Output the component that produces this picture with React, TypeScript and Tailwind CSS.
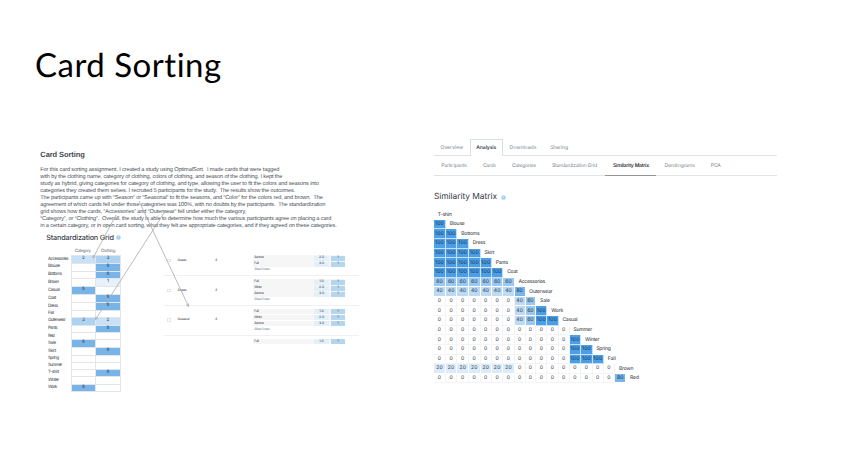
import { useLayoutEffect, useRef, useState } from "react";

// Single line of text, spaced out (or tightened) to fill a given width.
function Fit({ text, w, className = "" }: { text: string; w: number; className?: string }) {
  const ref = useRef<HTMLSpanElement>(null);
  const [ls, setLs] = useState(0);
  useLayoutEffect(() => {
    if (ref.current) {
      const natural = ref.current.getBoundingClientRect().width - ls * text.length;
      setLs((w - natural) / (text.length - 0.5));
    }
  }, [text, w]);
  return (
    <span className={`block shrink-0 whitespace-pre ${className}`} style={{ width: w }}>
      <span ref={ref} style={{ letterSpacing: ls }}>{text}</span>
    </span>
  );
}

const paragraph: [string, number][] = [
  ["For this card sorting assignment, I created a study using OptimalSort.  I made cards that were tagged", 239],
  ["with by the clothing name, category of clothing, colors of clothing, and season of the clothing. I kept the", 242],
  ["study as hybrid, giving categories for category of clothing, and type, allowing the user to fit the colors and seasons into", 278.5],
  ["categories they created them selves. I recruited 5 participants for the study.  The results show the outcomes.", 255],
  ["The participants came up with “Season” or “Seasonal” to fit the seasons, and “Color” for the colors red, and brown.  The", 282.5],
  ["agreement of which cards fell under those categories was 100%, with no doubts by the participants.  The standardization", 285],
  ["grid shows how the cards, “Accessories” and “Outerwear” fell under either the category,", 206],
  ["“Category”, or “Clothing”.  Overall, the study is able to determine how much the various participants agree on placing a card", 291],
  ["in a certain category, or in open card sorting, what they felt are appropriate categories, and if they agreed on these categories.", 296.5],
];

// name, label width, category count, clothing count, row height
const gridRows: [string, number, number, number, number][] = [
  ["Accessories", 20.5, 2, 3, 7.7],
  ["Blouse", 12, 0, 5, 7.8],
  ["Bottoms", 14, 0, 5, 7.7],
  ["Brown", 11, 0, 1, 7.9],
  ["Casual", 11.5, 5, 0, 7.9],
  ["Coat", 8, 0, 5, 7.8],
  ["Dress", 10, 0, 5, 7.8],
  ["Fall", 6, 0, 0, 7.2],
  ["Outerwear", 17.5, 3, 2, 7.7],
  ["Pants", 9.5, 0, 5, 7.7],
  ["Red", 6.5, 0, 0, 7],
  ["Sale", 8, 5, 0, 7.9],
  ["Skirt", 8, 0, 5, 7.7],
  ["Spring", 11, 0, 0, 7],
  ["Summer", 14, 0, 0, 7],
  ["T-shirt", 11, 0, 5, 7.7],
  ["Winter", 11, 0, 0, 7.2],
  ["Work", 9, 5, 0, 7.8],
];

const gridTone: Record<number, string> = {
  0: "bg-white",
  1: "bg-[#e6f1fb]",
  2: "bg-[#c9e1f6]",
  3: "bg-[#aed2f2]",
  5: "bg-[#78b4e8]",
};

const groups: { name: string; w: number; rows: [string, string][]; more: boolean }[] = [
  { name: "Season", w: 9, rows: [["Summer", "2.0"], ["Fall", "3.0"]], more: true },
  { name: "Season", w: 9, rows: [["Fall", "1.0"], ["Winter", "2.0"], ["Summer", "3.0"]], more: true },
  { name: "Seasonal", w: 11.5, rows: [["Fall", "1.0"], ["Winter", "2.0"], ["Summer", "3.0"]], more: true },
  { name: "", w: 0, rows: [["Fall", "1.0"]], more: false },
];

const colW = [11.9, 11.5, 11.6, 11.6, 11.4, 11.4, 11.3, 10.9, 10.7, 11.2, 11.2, 11.2, 11.4, 11.4, 11.3, 11.3, 11];

const matrix: [string, number, number[]][] = [
  ["T-shirt", 14, []],
  ["Blouse", 15, [100]],
  ["Bottoms", 18.5, [100, 100]],
  ["Dress", 12.5, [100, 100, 100]],
  ["Skirt", 10, [100, 100, 100, 100]],
  ["Pants", 12.3, [100, 100, 100, 100, 100]],
  ["Coat", 10.5, [100, 100, 100, 100, 100, 100]],
  ["Accessories", 26.7, [60, 60, 60, 60, 60, 60, 60]],
  ["Outerwear", 23, [40, 40, 40, 40, 40, 40, 40, 80]],
  ["Sale", 10, [0, 0, 0, 0, 0, 0, 0, 40, 60]],
  ["Work", 12, [0, 0, 0, 0, 0, 0, 0, 40, 60, 100]],
  ["Casual", 15, [0, 0, 0, 0, 0, 0, 0, 40, 60, 100, 100]],
  ["Summer", 18.5, [0, 0, 0, 0, 0, 0, 0, 0, 0, 0, 0, 0]],
  ["Winter", 14.3, [0, 0, 0, 0, 0, 0, 0, 0, 0, 0, 0, 0, 100]],
  ["Spring", 14.3, [0, 0, 0, 0, 0, 0, 0, 0, 0, 0, 0, 0, 100, 100]],
  ["Fall", 8, [0, 0, 0, 0, 0, 0, 0, 0, 0, 0, 0, 0, 100, 100, 100]],
  ["Brown", 14.5, [20, 20, 20, 20, 20, 20, 20, 0, 0, 0, 0, 0, 0, 0, 0, 0]],
  ["Red", 9, [0, 0, 0, 0, 0, 0, 0, 0, 0, 0, 0, 0, 0, 0, 0, 0, 80]],
];

const matrixTone: Record<number, string> = {
  0: "bg-white text-[#555b61] border-[#f3f4f5]",
  20: "bg-[#dcebf9] text-[#4a5968] border-white",
  40: "bg-[#bddaf5] text-[#40556b] border-white",
  60: "bg-[#9bc8f0] text-[#345069] border-white",
  80: "bg-[#78b5ec] text-[#2b4a68] border-white",
  100: "bg-[#4c9fe6] text-[#1f4468] border-[#c4dff6]",
};

const matrixTextWidth: Record<number, number> = { 0: 3.4, 20: 6.6, 40: 6.6, 60: 6.4, 80: 6.4, 100: 9 };

// label, gap before, width
const tabs: [string, number, number][] = [
  ["Downloads", 6.8, 26.8],
  ["Sharing", 13.8, 18],
];

const subTabs: [string, number, number][] = [
  ["Participants", 7.3, 25.6],
  ["Cards", 16, 13],
  ["Categories", 16, 24.3],
  ["Standardization Grid", 15.8, 45],
];

function Info() {
  return (
    <svg viewBox="0 0 10 10" className="mt-px size-[5px] shrink-0">
      <circle cx="5" cy="5" r="4.4" fill="#9ccdf1" />
      <path d="M3.7 3.8Q5 2.2 6.2 3.8Q6.2 4.7 5 5.4V6M5 7v.8" fill="none" stroke="white" strokeWidth="1" />
    </svg>
  );
}

function GridCell({ n, first }: { n: number; first?: boolean }) {
  return (
    <div
      className={`flex items-center justify-center border-b border-r border-[#e3e6e9] text-[4.5px] font-medium leading-none text-[#35495c] ${first ? "w-[25.4px] border-l" : "w-[24.8px]"} ${gridTone[n]}`}
    >
      {n > 0 ? n : ""}
    </div>
  );
}

function StandardizationGrid() {
  return (
    <div className="w-[124px] shrink-0">
      <div className="ml-[6px] flex h-[11px] items-center gap-[2.5px] text-[#3c434c]">
        <Fit text="Standardization Grid" w={67.5} className="text-[7.3px] font-medium leading-[11px]" />
        <Info />
      </div>
      <div className="mt-[5.4px] flex h-[6px] text-[4.3px] leading-[7px] text-[#5c6268]">
        <Fit text="Category" w={16} className="ml-[34.5px]" />
        <Fit text="Clothing" w={14.5} className="ml-[10px]" />
      </div>
      <div className="ml-[30.4px] mt-px w-[50.2px] border-t border-[#e3e6e9]" />
      {gridRows.map(([name, w, a, b, h]) => (
        <div key={name} className="flex" style={{ height: h }}>
          <div className="flex w-[30.4px] shrink-0 items-center pl-[7.7px] text-[4.4px] font-medium leading-none text-[#5a5f65]">
            <Fit text={name} w={w} />
          </div>
          <GridCell n={a} first />
          <GridCell n={b} />
        </div>
      ))}
    </div>
  );
}

function CategoryList() {
  return (
    <div className="mt-[22.8px] w-[195px] text-[3.4px] font-medium leading-none text-[#5c6167]">
      {groups.map((g, i) => (
        <div key={i} className={`flex ${i === 0 ? "h-[20.6px] pt-[0.8px]" : "h-[29.9px] border-t border-[#f0f1f2] pt-[3.2px]"}`}>
          <div className={`flex w-[89px] items-center ${i === 0 ? "h-[10px]" : "h-[22px]"}`}>
            {g.name && (
              <>
                <div className="ml-[3px] size-[3.6px] shrink-0 rounded-[0.5px] border border-[#dfe8ea]" />
                <Fit text={g.name} w={g.w} className="ml-[6.7px]" />
                <span className={i === 2 ? "ml-[26px]" : "ml-[28.5px]"}>4</span>
              </>
            )}
          </div>
          <div className="w-[92px]">
            {g.rows.map(([name, v]) => (
              <div key={name} className="mb-[0.7px] flex h-[5.3px] items-center bg-[#f6f6f6] pl-[1px] pt-[0.3px]">
                <Fit text={name} w={name === "Summer" ? 9.5 : name === "Fall" ? 4.5 : 7.5} />
                <div className="ml-auto mr-[2px] flex h-[5px] w-[14.5px] items-center justify-center bg-[#e2f0fa]">{v}</div>
                <div className="flex h-[5px] w-[14.5px] items-center justify-center bg-[#b4d6ee]">1</div>
              </div>
            ))}
            {g.more && <Fit text="Show 1 more" w={15.5} className="ml-[1px] pt-[1.2px] text-[#87939c]" />}
          </div>
        </div>
      ))}
    </div>
  );
}

function SimilarityMatrix() {
  return (
    <div className="mt-[7.7px]">
      {matrix.map(([name, w, values]) => (
        <div key={name} className="flex h-[9.63px] text-[5px] font-medium leading-none">
          {values.map((v, i) => (
            <div
              key={i}
              className={`flex shrink-0 items-center justify-center border-b border-r pt-[0.8px] ${matrixTone[v]}`}
              style={{ width: colW[i] }}
            >
              <Fit text={String(v)} w={matrixTextWidth[v]} />
            </div>
          ))}
          <div className="flex items-center pl-[3.8px] text-[#4c5157]">
            <Fit text={name} w={w} />
          </div>
        </div>
      ))}
    </div>
  );
}

export default function App() {
  return (
    <div
      className="relative h-[471px] w-[848px] overflow-hidden bg-white font-['Inter',sans-serif]"
      style={{ textRendering: "geometricPrecision" }}
    >
      <h1 className="h-[139px] pl-[35px] pt-[45px] font-['Lato',sans-serif] text-[33px] leading-[40px] text-black">
        <Fit text="Card Sorting" w={187} />
      </h1>
      <div className="flex">
        <section className="w-[434px] shrink-0 pl-[40.3px]">
          <Fit
            text="Card Sorting"
            w={44.5}
            className="mt-[10.6px] font-['Liberation_Sans',sans-serif] text-[7.5px] font-bold leading-[10px] text-[#414950]"
          />
          <div className="mt-[7.8px] font-['Liberation_Sans',sans-serif] text-[5.6px] leading-[6.93px] text-[#4b5159]">
            {paragraph.map(([line, w]) => (
              <Fit key={line} text={line} w={w} />
            ))}
          </div>
          <div className="mt-[1.9px] flex">
            <StandardizationGrid />
            <CategoryList />
          </div>
        </section>
        <section className="w-[343px]">
          <div className="flex h-[17px] border-b border-[#dfe4e7] text-[5.2px] leading-[18px] text-[#7d8992]">
            <Fit text="Overview" w={22.6} className="ml-[6.5px]" />
            <div className="ml-[7.2px] h-[17px] w-[32.5px] border-x border-t border-[#d8dfe2] bg-white pl-[5px] leading-[16.4px] text-[#2f353b]">
              <Fit text="Analysis" w={20} className="font-medium" />
            </div>
            {tabs.map(([t, gap, w]) => (
              <div key={t} style={{ marginLeft: gap }}>
                <Fit text={t} w={w} />
              </div>
            ))}
          </div>
          <div className="flex h-[20px] border-b border-[#dfe4e7] text-[5.1px] leading-[21px] text-[#7d8992]">
            {subTabs.map(([t, gap, w]) => (
              <div key={t} style={{ marginLeft: gap }}>
                <Fit text={t} w={w} />
              </div>
            ))}
            <div className="ml-[8.5px] h-[20px] w-[51px] border-b-[1.5px] border-[#929699] pl-[7.5px] text-[#2f353b]">
              <Fit text="Similarity Matrix" w={36} className="font-semibold" />
            </div>
            <Fit text="Dendrograms" w={30.3} className="ml-[8px]" />
            <Fit text="PCA" w={10} className="ml-[16px]" />
          </div>
          <div className="mt-[14.5px] flex h-[12px] items-center gap-[4px] text-[#343a45]">
            <Fit text="Similarity Matrix" w={63} className="text-[8.4px] leading-[12px]" />
            <Info />
          </div>
          <SimilarityMatrix />
        </section>
      </div>
      {/* Arrows linking the notes to the grid and the category list */}
      <svg viewBox="0 0 848 471" className="pointer-events-none absolute inset-0 h-full w-full" fill="none" stroke="#ababab" strokeWidth="0.8">
        <path d="M116 215L93 258M93 258l.2-3M93 258l2.4-1.6" />
        <path d="M164 213L95.5 319.5M95.5 319.5l.4-3M95.5 319.5l2.5-1.6" />
        <path d="M139 201L188.6 306.5M188.6 306.5l-2.5-2M188.6 306.5v-3.2" />
      </svg>
    </div>
  );
}
